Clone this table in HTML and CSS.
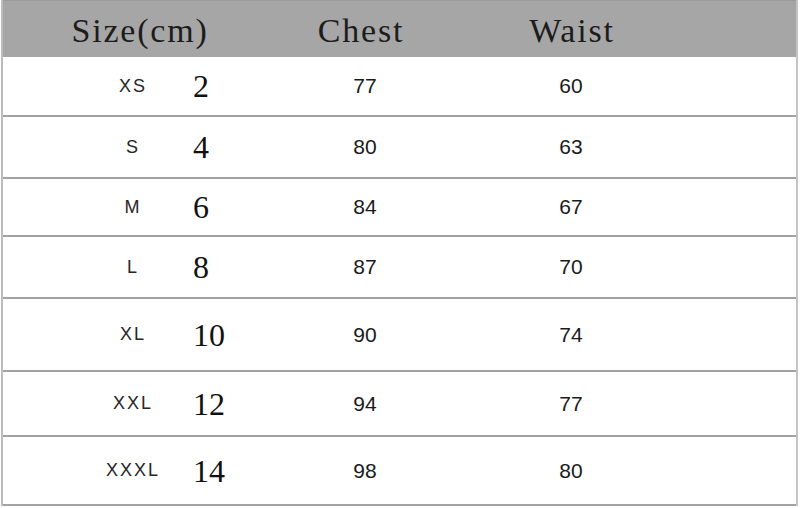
FILE: index.html
```html
<!DOCTYPE html>
<html>
<head>
<meta charset="utf-8">
<link rel="stylesheet" href="styles.css">
</head>
<body>
<div class="table">
  <div class="row head">
    <div class="h-size">Size(cm)</div>
    <div class="h-chest">Chest</div>
    <div class="h-waist">Waist</div>
  </div>
  <div class="row r1"><div class="sz">XS</div><div class="num">2</div><div class="val">77</div><div class="val">60</div></div>
  <div class="row r2"><div class="sz">S</div><div class="num">4</div><div class="val">80</div><div class="val">63</div></div>
  <div class="row r3"><div class="sz">M</div><div class="num">6</div><div class="val">84</div><div class="val">67</div></div>
  <div class="row r4"><div class="sz">L</div><div class="num">8</div><div class="val">87</div><div class="val">70</div></div>
  <div class="row r5"><div class="sz">XL</div><div class="num">10</div><div class="val">90</div><div class="val">74</div></div>
  <div class="row r6"><div class="sz">XXL</div><div class="num">12</div><div class="val">94</div><div class="val">77</div></div>
  <div class="row r7"><div class="sz">XXXL</div><div class="num">14</div><div class="val">98</div><div class="val">80</div></div>
</div>
</body>
</html>
```
FILE: styles.css
```css
html, body {
  margin: 0;
  padding: 0;
  background: #ffffff;
}
body {
  width: 800px;
  height: 508px;
  overflow: hidden;
}
.table {
  margin-left: 1px;
  width: 797px;
  border-left: 2px solid #bcbcbc;
  border-right: 2px solid #c4c4c4;
  box-sizing: border-box;
}
.row {
  display: grid;
  grid-template-columns: 188px 70px 208px 204px 1fr;
  align-items: center;
  box-sizing: border-box;
  border-bottom: 2px solid #a2a2a2;
  color: #1e1e1e;
}
.head {
  height: 57px;
  background: #a6a6a6;
  border-top: 1px solid #9a9a9a;
  border-bottom: none;
  font-family: "Liberation Serif", serif;
  font-size: 34px;
  letter-spacing: 1.8px;
  color: #1c1c1c;
  line-height: 1;
  padding-top: 3px;
}
.h-size {
  grid-column: 1 / 3;
  text-align: center;
  padding-left: 16px;
}
.h-chest {
  text-align: center;
  padding-right: 8px;
}
.h-waist {
  text-align: center;
  padding-left: 2px;
}
.r1 { height: 60px; }
.r2 { height: 62px; }
.r3 { height: 58px; }
.r4 { height: 62px; }
.r5 { height: 73px; }
.r6 { height: 65px; }
.r7 { height: 69px; }
.sz {
  font-family: "Liberation Sans", Arial, sans-serif;
  font-size: 18px;
  letter-spacing: 2px;
  text-align: center;
  padding-left: 72px;
  color: #262626;
}
.num {
  font-family: "Liberation Serif", serif;
  font-size: 32px;
  padding-left: 2px;
  line-height: 1;
  color: #111;
}
.val {
  font-family: "Liberation Sans", Arial, sans-serif;
  font-size: 21px;
  text-align: center;
  color: #1a1a1a;
}
```
